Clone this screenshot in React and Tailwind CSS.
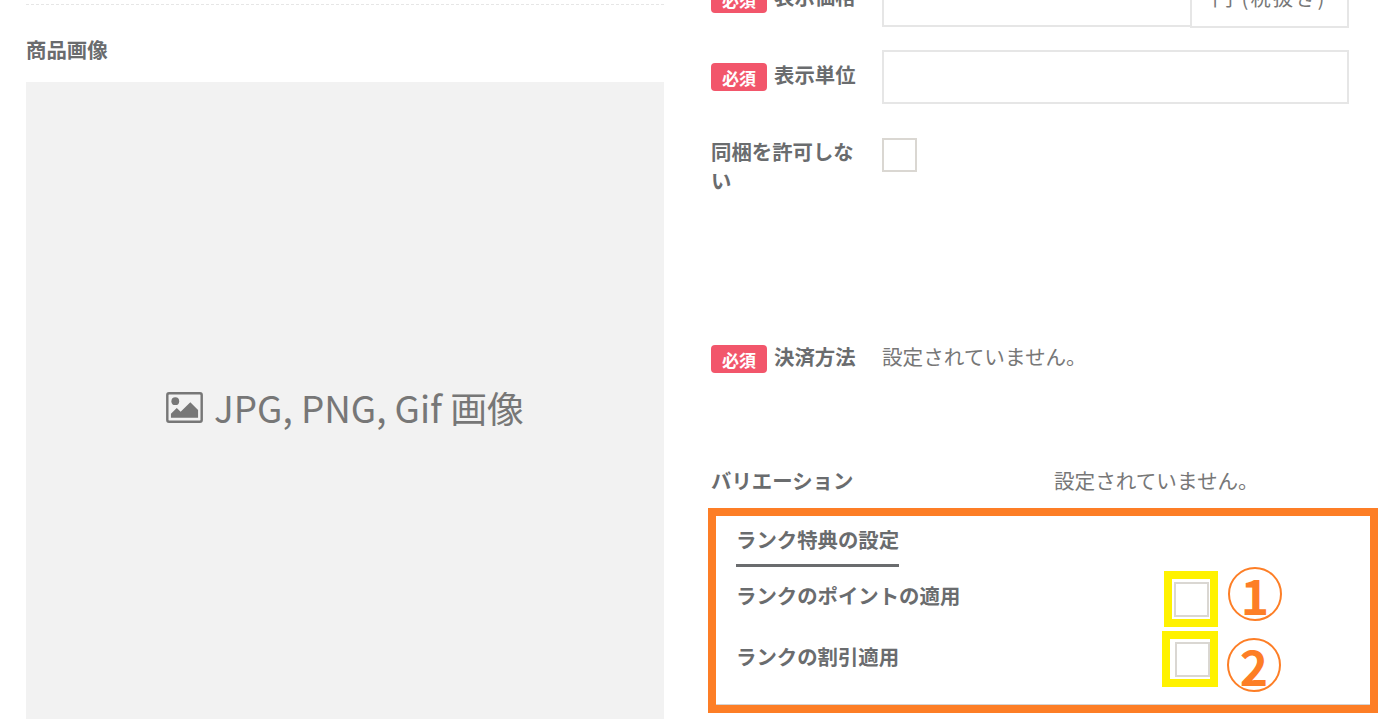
const font = { fontFamily: '"Noto Sans CJK JP", "Noto Sans", sans-serif' };

function Badge() {
  return (
    <span className="flex h-[28px] w-[56px] shrink-0 items-center justify-center rounded-[4px] bg-[#f2566b] text-[17px] font-bold leading-none text-white">
      必須
    </span>
  );
}

function RequiredLabel({ children }) {
  return (
    <div className="flex w-[171px] shrink-0 items-center gap-[7px] text-[20.4px] font-bold leading-[28px] text-[#6a6c6e]">
      <Badge />
      <span className="pb-[6px]">{children}</span>
    </div>
  );
}

function Check({ className }) {
  return <div className={`border-2 border-[#dad7d2] bg-white ${className}`} />;
}

function Circled({ n, className }) {
  return (
    <span className={`flex h-[54px] w-[54px] items-center justify-center rounded-full border-2 border-[#fd7e26] text-[48px] font-semibold leading-none text-[#fd7e26] ${className}`}>
      {n}
    </span>
  );
}

export default function App() {
  return (
    <div style={font} className="flex h-[719px] w-[1387px] overflow-hidden bg-white">
      <div className="ml-[26px] flex w-[638px] shrink-0 flex-col pt-[4px]">
        <div className="border-t border-dashed border-[#e6e6e6]" />
        <h2 className="mt-[29px] text-[20.4px] font-bold leading-[30px] text-[#6a6c6e]">商品画像</h2>
        <div className="mt-[18px] flex h-[650px] shrink-0 items-center justify-center bg-[#f2f2f2] text-[36.8px] leading-none text-[#777777]">
          <svg viewBox="0 0 38 32" className="mr-[11px] h-[31px] w-[37px]" fill="#777777">
            <path fillRule="evenodd" d="M3 0h32a3 3 0 0 1 3 3v26a3 3 0 0 1-3 3H3a3 3 0 0 1-3-3V3a3 3 0 0 1 3-3Zm0 2.500a.5.5 0 0 0-.5.5v26a.5.5 0 0 0 .5.5h32a.5.5 0 0 0 .5-.5V3a.5.5 0 0 0-.5-.5Z" />
            <circle cx="9.500" cy="9.500" r="4" />
            <path d="M5 26.500v-4l6-6 4 4 10-10 8 8v8Z" />
          </svg>
          <span>JPG, PNG, Gif 画像</span>
        </div>
      </div>

      <div className="ml-[47px] flex w-[638px] shrink-0 flex-col">
        <div className="mt-[-27px] flex h-[54px] items-center">
          <div className="-mt-[2px]">
            <RequiredLabel>表示価格</RequiredLabel>
          </div>
          <div className="flex h-[54px] flex-1">
            <div className="flex-1 border-2 border-[#e6e6e6]" />
            <div className="-ml-[2px] flex h-[55px] w-[159px] items-center justify-center border-2 border-[#e6e6e6] pb-[6px] text-[20.4px] tracking-[2px] text-[#777777]">
              円 (税抜き)
            </div>
          </div>
        </div>

        <div className="mt-[23px] flex h-[54px] items-center">
          <RequiredLabel>表示単位</RequiredLabel>
          <div className="h-[54px] flex-1 border-2 border-[#e6e6e6]" />
        </div>

        <div className="mt-[34px] flex h-[56px]">
          <div className="-mt-[1px] w-[171px] shrink-0 pr-[16px] text-[20.4px] font-bold leading-[29px] text-[#6a6c6e]">同梱を許可しない</div>
          <Check className="h-[34px] w-[35px]" />
        </div>

        <div className="mt-[151px] flex h-[28px] items-center">
          <RequiredLabel>決済方法</RequiredLabel>
          <span className="pb-[6px] text-[20.6px] leading-[28px] text-[#777777]">設定されていません。</span>
        </div>

        <div className="mt-[94px] flex h-[28px] items-center pb-[2px]">
          <span className="w-[343px] shrink-0 text-[20.4px] font-bold text-[#6a6c6e]">バリエーション</span>
          <span className="text-[20.6px] text-[#777777]">設定されていません。</span>
        </div>

        <div className="ml-[-3px] mt-[13px] h-[205px] w-[670px] border-[8px] border-[#fd7e26]">
          <div className="h-full border-b border-[#d4d4d4] px-[20px]">
            <div className="inline-block h-[51px] border-b-[3px] border-[#6a6c6e] pt-[8px] text-[20.4px] font-bold leading-[30px] text-[#6a6c6e]">
              ランク特典の設定
            </div>
            <div className="relative">
              <div className="flex h-[56px] items-center text-[20.4px] font-bold text-[#6a6c6e]">ランクのポイントの適用</div>
              <div className="mt-[5px] flex h-[56px] items-center text-[20.4px] font-bold text-[#6a6c6e]">ランクの割引適用</div>
              <div className="absolute left-[428px] top-[4px] flex h-[56px] w-[54px] items-center justify-center border-[8px] border-[#fff200]">
                <Check className="h-[35px] w-[35px]" />
              </div>
              <div className="absolute left-[426px] top-[64px] flex h-[56px] w-[56px] items-center justify-end border-[8px] border-[#fff200]">
                <Check className="h-[35px] w-[35px]" />
              </div>
              <Circled n="1" className="absolute left-[492px] top-[0px]" />
              <Circled n="2" className="absolute left-[491px] top-[71px]" />
            </div>
          </div>
        </div>
      </div>
    </div>
  );
}
